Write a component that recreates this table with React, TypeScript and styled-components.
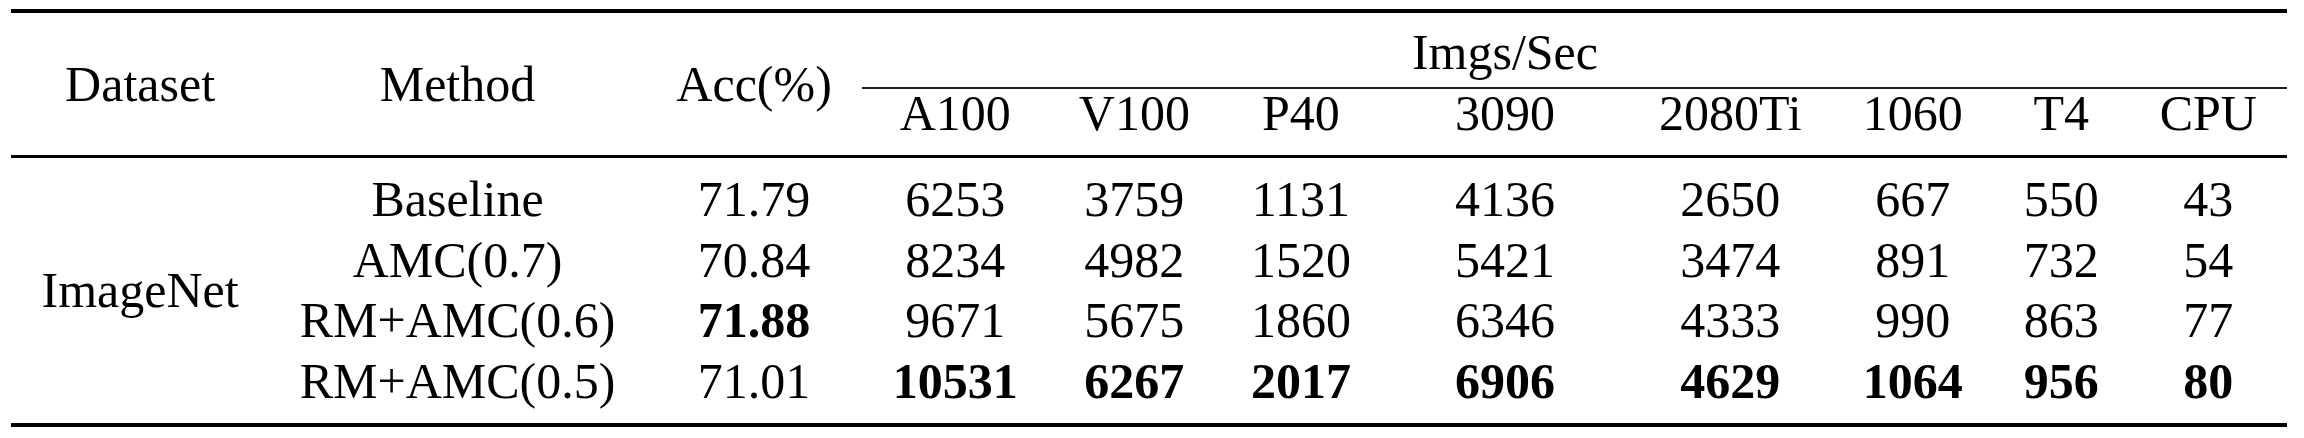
import styled, { createGlobalStyle } from "styled-components";

const GlobalStyle = createGlobalStyle`
  html, body {
    margin: 0;
    padding: 0;
    background: #fff;
  }
`;

const devices = ["A100", "V100", "P40", "3090", "2080Ti", "1060", "T4", "CPU"];

type Row = {
  method: string;
  acc: string;
  accBold?: boolean;
  speeds: number[];
  speedsBold?: boolean;
};

const rows: Row[] = [
  { method: "Baseline", acc: "71.79", speeds: [6253, 3759, 1131, 4136, 2650, 667, 550, 43] },
  { method: "AMC(0.7)", acc: "70.84", speeds: [8234, 4982, 1520, 5421, 3474, 891, 732, 54] },
  { method: "RM+AMC(0.6)", acc: "71.88", accBold: true, speeds: [9671, 5675, 1860, 6346, 4333, 990, 863, 77] },
  {
    method: "RM+AMC(0.5)",
    acc: "71.01",
    speeds: [10531, 6267, 2017, 6906, 4629, 1064, 956, 80],
    speedsBold: true,
  },
];

function App() {
  return (
    <>
      <GlobalStyle />
      <Page>
        <Table>
          <thead>
            <tr>
              <SpanHead rowSpan={2}>Dataset</SpanHead>
              <SpanHead rowSpan={2}>Method</SpanHead>
              <SpanHead rowSpan={2}>Acc(%)</SpanHead>
              <GroupHead colSpan={3} />
              <GroupHead>Imgs/Sec</GroupHead>
              <GroupHead colSpan={4} />
            </tr>
            <tr>
              {devices.map((d) => (
                <SubHead key={d}>{d}</SubHead>
              ))}
            </tr>
          </thead>
          <Body>
            {rows.map((r, i) => (
              <tr key={r.method}>
                {i === 0 && (
                  <DataCell rowSpan={rows.length} $span>
                    ImageNet
                  </DataCell>
                )}
                <DataCell>{r.method}</DataCell>
                <DataCell $bold={r.accBold}>{r.acc}</DataCell>
                {r.speeds.map((s, j) => (
                  <DataCell key={devices[j]} $bold={r.speedsBold}>
                    {s}
                  </DataCell>
                ))}
              </tr>
            ))}
          </Body>
        </Table>
      </Page>
    </>
  );
}

export default App;

const Page = styled.div`
  padding: 9px 0 0 11px;
`;

const Table = styled.table`
  border-collapse: separate;
  border-spacing: 0;
  border-top: 4px solid #000;
  border-bottom: 4px solid #000;
  font-family: "Liberation Serif", Tinos, "Nimbus Roman", "Times New Roman", Times, "DejaVu Serif", serif;
  font-size: 50px;
  color: #000;
  white-space: nowrap;

  th,
  td {
    font-family: inherit;
  }
`;

const SpanHead = styled.th`
  padding: 0 30.5px;
  font-weight: 400;
  text-align: center;
  vertical-align: middle;
  line-height: 48px;
  border-bottom: 3px solid #000;
`;

const GroupHead = styled.th`
  padding: 4px 30.5px 0;
  font-weight: 400;
  text-align: center;
  line-height: 70px;
  border-bottom: 2px solid #222;
`;

const SubHead = styled.th`
  padding: 0 30.5px 18px;
  font-weight: 400;
  text-align: center;
  line-height: 48px;
  border-bottom: 3px solid #000;
`;

const Body = styled.tbody`
  tr:first-child td {
    padding-top: 11px;
  }
  tr:last-child td {
    padding-bottom: 12px;
  }
`;

const DataCell = styled.td<{ $bold?: boolean; $span?: boolean }>`
  padding: 0 30.5px;
  text-align: center;
  line-height: 60.5px;
  font-weight: ${(p) => (p.$bold ? 700 : 400)};
  vertical-align: ${(p) => (p.$span ? "middle" : "baseline")};
  ${(p) => (p.$span ? "padding-bottom: 12px;" : "")}
`;
